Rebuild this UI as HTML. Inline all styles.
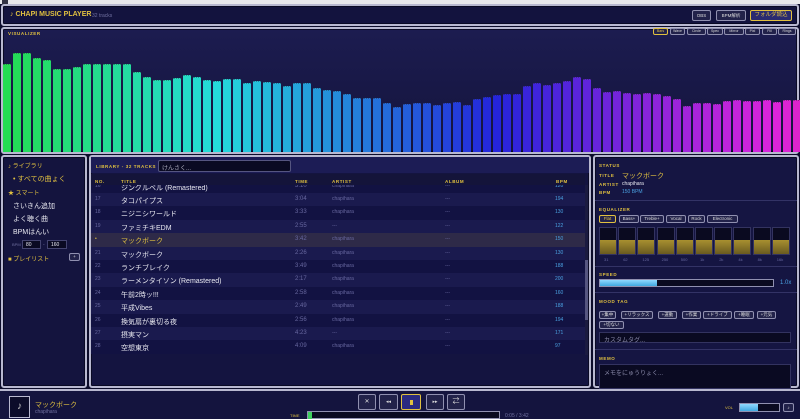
<!DOCTYPE html>
<html><head><meta charset="utf-8"><style>
*{box-sizing:border-box;margin:0;padding:0}
body{width:800px;height:419px;overflow:hidden;background:#0c0c2a;font-family:"Liberation Sans","Noto Sans CJK JP",sans-serif;color:#e8e8f0;position:relative}
.a{position:absolute}
.p{position:absolute;background:#16164a;border:2px solid #b8b8d0;border-radius:3px;box-shadow:inset 0 0 0 1px #0a0a25}
.lab{position:absolute;font-size:4.5px;color:#e0c040;letter-spacing:0.6px;white-space:nowrap;font-weight:bold}
.btn{position:absolute;border:1px solid #9090b0;border-radius:2px;background:#22224a;font-size:4.5px;color:#ddd;text-align:center;line-height:6px;height:8px;white-space:nowrap;overflow:hidden}
.t{position:absolute;font-size:7px;white-space:nowrap}
.row{position:absolute;left:91px;width:494px;height:13.4px;font-size:7px}
.row span{position:absolute;top:3px;white-space:nowrap}
.bar{position:absolute;bottom:0;width:8px}
</style></head><body>
<div class="a" style="left:0;top:0;width:800px;height:4px;background:#e8e8ec"></div>
<div class="a" style="left:2px;top:0;width:6px;height:4px;background:#334"></div>
<div class="p" style="left:1px;top:4px;width:798px;height:22px;background:#13133e"></div>
<div class="t" style="left:10px;top:11px;color:#e0c040;font-size:7px;font-weight:bold">♪ CHAPI MUSIC PLAYER</div>
<div class="t" style="left:92px;top:13px;color:#7070a0;font-size:5px">32 tracks</div>
<div class="btn" style="left:692px;top:10px;width:19px;height:11px;line-height:9px">OBS</div>
<div class="btn" style="left:716px;top:10px;width:30px;height:11px;line-height:9px">BPM解析</div>
<div class="btn" style="left:750px;top:10px;width:42px;height:11px;line-height:9px;border-color:#e0c040;background:#2a2a70;color:#e0c040;font-size:5.5px">フォルダ読込</div>
<div class="p" style="left:1px;top:27px;width:798px;height:127px;background:linear-gradient(#1c1c50,#14143c)"></div>
<div class="lab" style="left:8px;top:31px">VISUALIZER</div>
<div class="btn" style="left:653px;top:28px;width:15px;height:7px;line-height:5px;border-color:#e0c040;color:#e0c040;font-size:3.5px">Bars</div>
<div class="btn" style="left:670px;top:28px;width:15px;height:7px;line-height:5px;font-size:3.5px">Wave</div>
<div class="btn" style="left:687px;top:28px;width:19px;height:7px;line-height:5px;font-size:3.5px">Circle</div>
<div class="btn" style="left:707px;top:28px;width:16px;height:7px;line-height:5px;font-size:3.5px">Spec</div>
<div class="btn" style="left:724px;top:28px;width:20px;height:7px;line-height:5px;font-size:3.5px">Mirror</div>
<div class="btn" style="left:745px;top:28px;width:15px;height:7px;line-height:5px;font-size:3.5px">Pixl</div>
<div class="btn" style="left:762px;top:28px;width:15px;height:7px;line-height:5px;font-size:3.5px">Fill</div>
<div class="btn" style="left:778px;top:28px;width:18px;height:7px;line-height:5px;font-size:3.5px">Rings</div>
<div id="viz" class="a" style="left:3px;top:40px;width:796px;height:112px"></div>
<div class="p" style="left:1px;top:155px;width:86px;height:233px;background:#14143e"></div>
<div class="t" style="left:8px;top:161px;color:#e0c040;font-size:6px">♪ ライブラリ</div>
<div class="t" style="left:13px;top:174px;color:#e0c040;font-size:7px">• すべての曲ょく</div>
<div class="t" style="left:8px;top:188px;color:#e0c040;font-size:6px">★ スマート</div>
<div class="t" style="left:13px;top:201px;font-size:7px">さいきん追加</div>
<div class="t" style="left:13px;top:214px;font-size:7px">よく聴く曲</div>
<div class="t" style="left:13px;top:227px;font-size:7px">BPMはんい</div>
<div class="t" style="left:12px;top:242px;color:#7070a0;font-size:4px">BPM</div>
<div class="a" style="left:22px;top:240px;width:19px;height:9px;background:#0a0a22;border:1px solid #444470;font-size:5px;padding:1px 3px">80</div>
<div class="t" style="left:43px;top:242px;color:#7070a0;font-size:5px">-</div>
<div class="a" style="left:47px;top:240px;width:20px;height:9px;background:#0a0a22;border:1px solid #444470;font-size:5px;padding:1px 3px">160</div>
<div class="t" style="left:8px;top:254px;color:#e0c040;font-size:6px">■ プレイリスト</div>
<div class="btn" style="left:69px;top:253px;width:11px;height:8px">+</div>
<div class="p" style="left:89px;top:155px;width:502px;height:233px;background:#141440"></div>
<div class="a" style="left:91px;top:157px;width:498px;height:16px;background:#1c1c55"></div>
<div class="lab" style="left:96px;top:164px">LIBRARY - 32 TRACKS</div>
<div class="a" style="left:158px;top:160px;width:133px;height:12px;background:#0a0a22;border:1px solid #555580;border-radius:2px;font-size:6px;color:#aab;padding:2px 3px">けんさく...</div>
<div id="rows"></div>
<div class="a" style="left:91px;top:174px;width:494px;height:11px;background:#14143a"></div>
<div class="lab" style="left:95px;top:179px">NO.</div><div class="lab" style="left:121px;top:179px">TITLE</div><div class="lab" style="left:295px;top:179px">TIME</div><div class="lab" style="left:332px;top:179px">ARTIST</div><div class="lab" style="left:445px;top:179px">ALBUM</div><div class="lab" style="left:556px;top:179px">BPM</div>
<div class="a" style="left:585px;top:185px;width:3px;height:170px;background:#1a1a40"></div>
<div class="a" style="left:585px;top:260px;width:3px;height:60px;background:#555580"></div>
<div class="p" style="left:593px;top:155px;width:206px;height:233px;background:#151542"></div>
<div class="lab" style="left:599px;top:163px">STATUS</div>
<div class="lab" style="left:599px;top:173px">TITLE</div><div class="t" style="left:622px;top:171px;color:#e0c040;font-size:7px">マックボーク</div>
<div class="lab" style="left:599px;top:182px">ARTIST</div><div class="t" style="left:622px;top:181px;font-size:5px">chapihara</div>
<div class="lab" style="left:599px;top:190px">BPM</div><div class="t" style="left:622px;top:189px;font-size:5px;color:#4aa0e0">150 BPM</div>
<div class="a" style="left:595px;top:200px;width:202px;height:1px;background:#333366"></div>
<div class="lab" style="left:599px;top:207px">EQUALIZER</div>
<div class="btn" style="left:599px;top:215px;width:17px;border-color:#e0c040;color:#e0c040">Flat</div>
<div class="btn" style="left:619px;top:215px;width:20px">Bass+</div>
<div class="btn" style="left:640px;top:215px;width:24px">Treble+</div>
<div class="btn" style="left:666px;top:215px;width:20px">Vocal</div>
<div class="btn" style="left:688px;top:215px;width:17px">Rock</div>
<div class="btn" style="left:707px;top:215px;width:31px">Electronic</div>
<div id="eq"></div>
<div class="a" style="left:595px;top:266px;width:202px;height:1px;background:#333366"></div>
<div class="lab" style="left:599px;top:272px">SPEED</div>
<div class="a" style="left:599px;top:279px;width:175px;height:8px;background:#0a0a20;border:1px solid #9090b0"></div>
<div class="a" style="left:600px;top:280px;width:57px;height:6px;background:linear-gradient(#90d8ff,#40a8e0)"></div>
<div class="t" style="left:780px;top:280px;font-size:6px;color:#4aa0e0">1.0x</div>
<div class="a" style="left:595px;top:292px;width:202px;height:1px;background:#333366"></div>
<div class="lab" style="left:599px;top:299px">MOOD TAG</div>
<div class="btn" style="left:599px;top:311px;width:17px">+集中</div>
<div class="btn" style="left:621px;top:311px;width:32px">+リラックス</div>
<div class="btn" style="left:658px;top:311px;width:19px">+運動</div>
<div class="btn" style="left:682px;top:311px;width:19px">+作業</div>
<div class="btn" style="left:703px;top:311px;width:29px">+ドライブ</div>
<div class="btn" style="left:734px;top:311px;width:20px">+睡眠</div>
<div class="btn" style="left:757px;top:311px;width:19px">+元気</div>
<div class="btn" style="left:599px;top:321px;width:25px">+切ない</div>
<div class="a" style="left:599px;top:332px;width:192px;height:11px;background:#0a0a22;border:1px solid #333360;font-size:6px;color:#8888a8;padding:2px 4px">カスタムタグ...</div>
<div class="a" style="left:595px;top:349px;width:202px;height:1px;background:#333366"></div>
<div class="lab" style="left:599px;top:356px">MEMO</div>
<div class="a" style="left:599px;top:364px;width:192px;height:25px;background:#0a0a22;border:1px solid #333360;font-size:6px;color:#8888a8;padding:3px 4px">メモをにゅうりょく...</div>
<div class="a" style="left:0;top:389px;width:800px;height:30px;background:#14143e;border-top:2px solid #b8b8d0"></div>
<div class="a" style="left:9px;top:396px;width:21px;height:22px;border:1px solid #b8b8d0;background:#0c0c2a;font-size:10px;text-align:center;line-height:20px;color:#ccc">♪</div>
<div class="t" style="left:35px;top:400px;color:#e0c040;font-size:7px">マックボーク</div>
<div class="t" style="left:35px;top:409px;color:#7070a0;font-size:5px">chapihara</div>
<div class="btn" style="left:358px;top:394px;width:18px;height:16px;line-height:14px;font-size:6px">✕</div>
<div class="btn" style="left:379px;top:394px;width:19px;height:16px;line-height:14px;font-size:5px">◂◂</div>
<div class="btn" style="left:401px;top:394px;width:20px;height:16px;border-color:#e0c040;background:#2a2a80"><div class="a" style="left:8px;top:5px;width:3px;height:5px;background:#e0c040"></div></div>
<div class="btn" style="left:426px;top:394px;width:18px;height:16px;line-height:14px;font-size:5px">▸▸</div>
<div class="btn" style="left:447px;top:394px;width:18px;height:16px;line-height:14px;font-size:7px">⇄</div>
<div class="t" style="left:290px;top:413px;color:#e0c040;font-size:4px">TIME</div>
<div class="a" style="left:307px;top:411px;width:193px;height:8px;background:#0a0a20;border:1px solid #9090b0"></div>
<div class="a" style="left:308px;top:412px;width:4px;height:7px;background:#40d060"></div>
<div class="t" style="left:505px;top:413px;color:#7070a0;font-size:5px">0:05 / 3:42</div>
<div class="t" style="left:725px;top:405px;color:#e0c040;font-size:4px">VOL</div>
<div class="a" style="left:739px;top:403px;width:41px;height:9px;background:#0a0a20;border:1px solid #9090b0"></div>
<div class="a" style="left:740px;top:404px;width:18px;height:7px;background:linear-gradient(#90d8ff,#40a8e0)"></div>
<div class="btn" style="left:783px;top:403px;width:11px;height:9px;line-height:7px">♪</div>
<script>
var tops=[75,40,40,57,63,90,88,84,73,73,73,73,73,97,113,121,121,115,106,112,121,124,118,118,132,126,127,132,140,131,131,145,153,155,164,177,177,177,190,202,195,190,192,196,192,188,197,180,174,167,164,165,141,131,136,132,124,112,120,145,157,156,160,163,162,164,169,179,200,192,192,193,186,183,186,184,181,187,183,181];
var v=document.getElementById('viz'),h='';
for(var i=0;i<80;i++){var ht=(338-tops[i])/3;var hue=135+170*i/79;
h+='<div class="bar" style="left:'+(i*10)+'px;height:'+ht+'px;background:hsl('+hue+',72%,50%);border-top:1px dotted hsl('+hue+',60%,35%)"></div>';}
v.innerHTML=h;
var rows=[["16","ジングルベル (Remastered)","3:10","chapihara","---","120"],["17","タコパイプス","3:04","chapihara","---","194"],["18","ニジニシワールド","3:33","chapihara","---","130"],["19","ファミチキEDM","2:55","---","---","122"],["•","マックボーク","3:42","chapihara","---","150"],["21","マックボーク","2:26","chapihara","---","130"],["22","ランチブレイク","3:49","chapihara","---","188"],["23","ラーメンタイソン (Remastered)","2:17","chapihara","---","200"],["24","午前2時ッ!!!","2:58","chapihara","---","160"],["25","平成Vibes","2:49","chapihara","---","188"],["26","換気扇が裏切る夜","2:56","chapihara","---","194"],["27","摂実マン","4:23","---","---","171"],["28","空想東京","4:09","chapihara","---","97"]];
var r='';
for(var j=0;j<rows.length;j++){var y=179.6+j*13.4;var d=rows[j];var hl=j==4;
var bg=hl?'#2e2a48':(j%2?'#1a1a4e':'#121242');var tc=hl?'#e0c040':'#e8e8f0';
r+='<div class="row" style="top:'+y+'px;background:'+bg+';"><span style="left:4px;color:'+(hl?'#e0c040':'#6868a0')+';font-size:5px">'+d[0]+'</span><span style="left:30px;color:'+tc+'">'+d[1]+'</span><span style="left:204px;color:#6868a0;font-size:6px">'+d[2]+'</span><span style="left:241px;color:#6868a0;font-size:5px">'+d[3]+'</span><span style="left:354px;color:#6868a0;font-size:5px">'+d[4]+'</span><span style="left:464px;color:#4aa0e0;font-size:5px">'+d[5]+'</span></div>';}
document.getElementById('rows').innerHTML=r;
var eq='',labs=['31','62','125','250','500','1k','2k','4k','8k','16k'];
for(var k=0;k<10;k++){var x=599+k*19.2;
eq+='<div class="a" style="left:'+x+'px;top:227px;width:18px;height:28px;background:#0a0a20;border:1px solid #333360"></div><div class="a" style="left:'+(x+1)+'px;top:240px;width:16px;height:14px;background:linear-gradient(#a89030,#6a5a20)"></div><div class="t" style="left:'+(x+5)+'px;top:257px;font-size:4px;color:#6868a0">'+labs[k]+'</div>';}
document.getElementById('eq').innerHTML=eq;
</script>
</body></html>
